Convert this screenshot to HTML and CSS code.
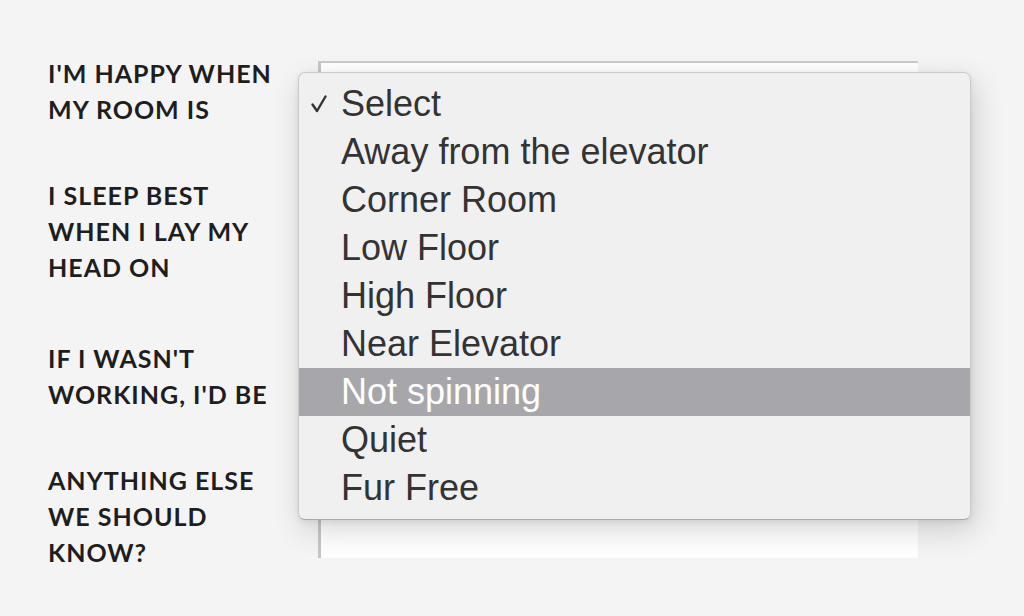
FILE: index.html
```html
<!DOCTYPE html>
<html>
<head>
<meta charset="utf-8">
<link rel="stylesheet" href="styles.css">
</head>
<body>
<form class="form">
  <div class="row row-1">
    <label class="label">I'M HAPPY WHEN<br>MY ROOM IS</label>
    <div class="field field-select"></div>
  </div>
  <div class="row row-2">
    <label class="label">I SLEEP BEST<br>WHEN I LAY MY<br>HEAD ON</label>
    <div class="field field-select"></div>
  </div>
  <div class="row row-3">
    <label class="label">IF I WASN'T<br>WORKING, I'D BE</label>
    <div class="field field-select"></div>
  </div>
  <div class="row row-4">
    <label class="label">ANYTHING ELSE<br>WE SHOULD<br>KNOW?</label>
    <div class="field field-text"></div>
  </div>
</form>

<ul class="menu">
  <li class="item checked"><svg class="check" width="18" height="20" viewBox="0 0 18 20"><path d="M2.5 10.5 L7 17 L15.5 2.5" fill="none" stroke="#333" stroke-width="2.4" stroke-linecap="round" stroke-linejoin="round"/></svg>Select</li>
  <li class="item">Away from the elevator</li>
  <li class="item">Corner Room</li>
  <li class="item">Low Floor</li>
  <li class="item">High Floor</li>
  <li class="item">Near Elevator</li>
  <li class="item active">Not spinning</li>
  <li class="item">Quiet</li>
  <li class="item">Fur Free</li>
</ul>
</body>
</html>
```

FILE: styles.css
```css
html, body {
  margin: 0;
  padding: 0;
  background: #f4f4f4;
}
body {
  width: 1024px;
  height: 616px;
  overflow: hidden;
  position: relative;
}
.form {
  padding: 55px 0 0 48px;
  display: flex;
  flex-direction: column;
}
.row {
  display: grid;
  grid-template-columns: 270px 600px;
}
.row-1 { height: 122px; }
.row-2 { height: 163px; }
.row-3 { height: 122px; }
.label {
  font-family: "Lato", "Liberation Sans", sans-serif;
  font-weight: 700;
  font-size: 25px;
  line-height: 36px;
  color: #1e1e20;
  letter-spacing: 1px;
  white-space: nowrap;
}
.field {
  background: #fff;
  border-top: 2px solid #cbcbcb;
  border-left: 3px solid #c6c6c6;
  box-sizing: border-box;
  margin-top: 6px;
  height: 100px;
}
.row-4 .field-text {
  height: 118px;
  margin-top: -22px;
}
.menu {
  position: absolute;
  left: 298px;
  top: 72px;
  width: 673px;
  height: 448px;
  box-sizing: border-box;
  margin: 0;
  padding: 7px 0 0 0;
  list-style: none;
  background: #f0f0f0;
  border: 1px solid #cacaca;
  border-bottom-color: #a8a8a8;
  border-radius: 7px;
  box-shadow: 4px 10px 30px rgba(0,0,0,0.16), 0 2px 6px rgba(0,0,0,0.08);
}
.item {
  position: relative;
  height: 48px;
  line-height: 48px;
  padding-left: 42px;
  font-family: "Liberation Sans", Arial, sans-serif;
  font-size: 36px;
  color: #333;
}
.item.active {
  background: #a7a7ab;
  color: #fff;
}
.check {
  position: absolute;
  left: 11px;
  top: 14px;
}
```
